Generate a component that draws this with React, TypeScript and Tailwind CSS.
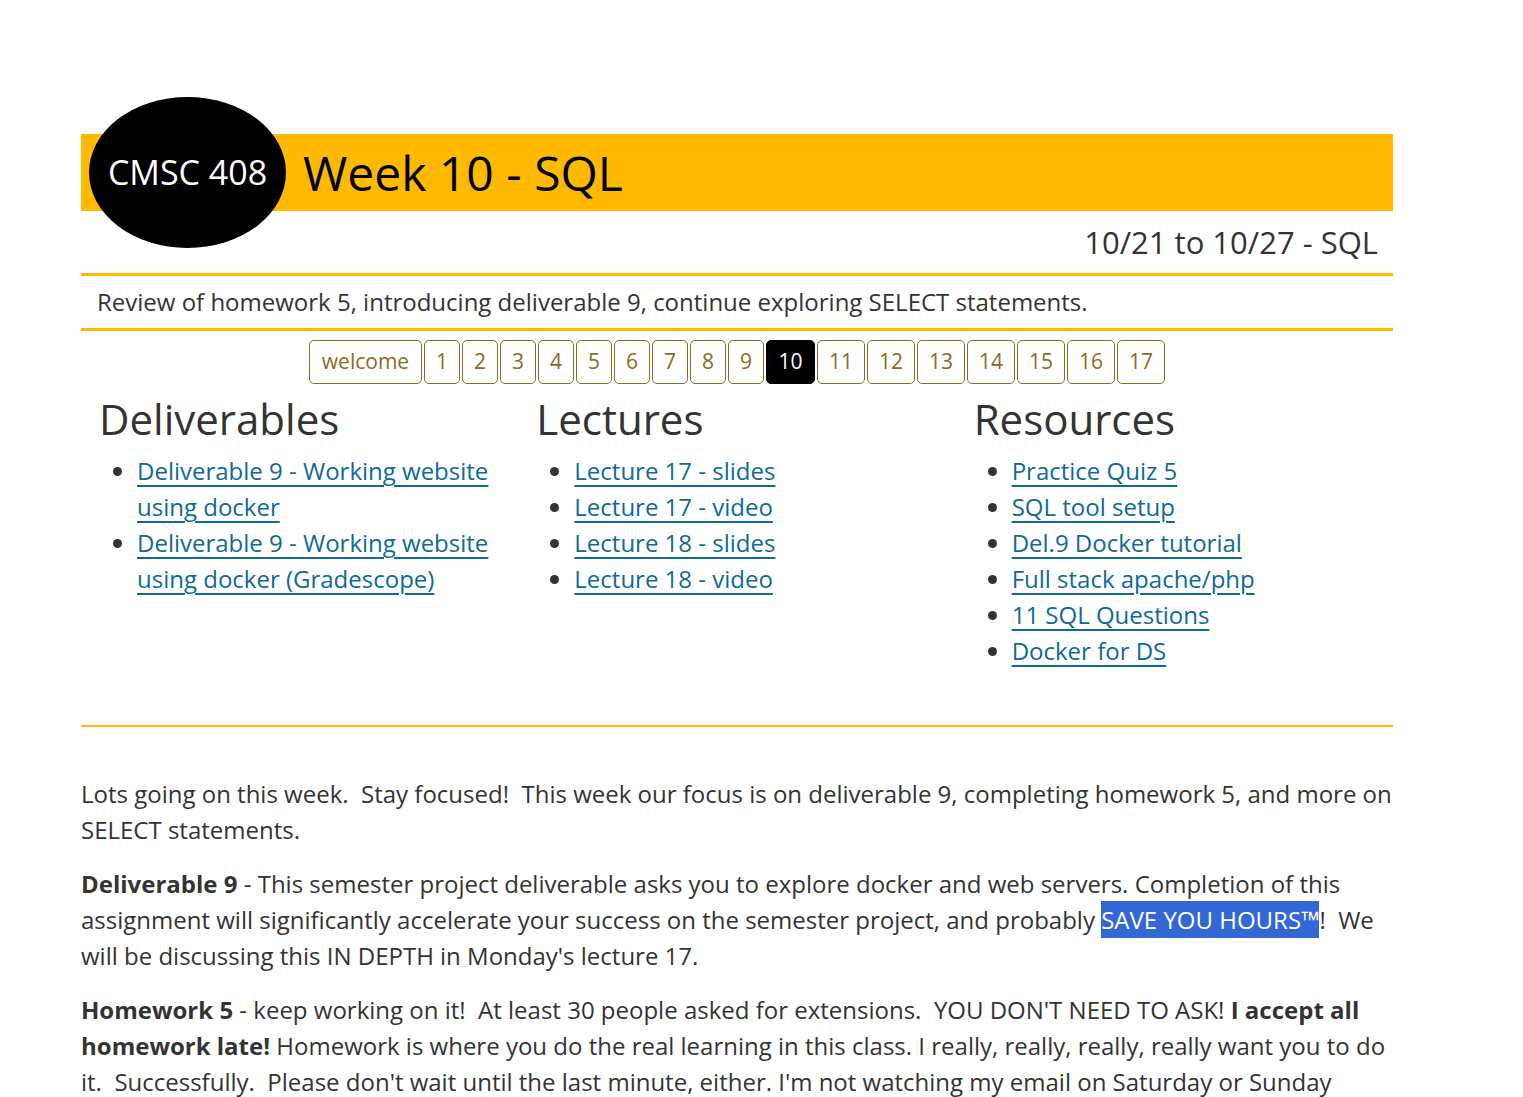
const weeks = ["1", "2", "3", "4", "5", "6", "7", "8", "9", "10", "11", "12", "13", "14", "15", "16", "17"];

const columns = [
  {
    title: "Deliverables",
    links: [
      "Deliverable 9 - Working website using docker",
      "Deliverable 9 - Working website using docker (Gradescope)",
    ],
  },
  {
    title: "Lectures",
    links: ["Lecture 17 - slides", "Lecture 17 - video", "Lecture 18 - slides", "Lecture 18 - video"],
  },
  {
    title: "Resources",
    links: [
      "Practice Quiz 5",
      "SQL tool setup",
      "Del.9 Docker tutorial",
      "Full stack apache/php",
      "11 SQL Questions",
      "Docker for DS",
    ],
  },
];

function WeekNav() {
  return (
    <nav className="mt-[9px] flex justify-center gap-[2px]">
      <a className="flex h-[44px] w-[113px] items-center justify-center rounded-[5px] border border-[#8c6a1f] text-[21px] text-[#8c6a1f]">
        welcome
      </a>
      {weeks.map((w) => (
        <a
          key={w}
          className={
            w === "10"
              ? "flex h-[44px] w-[49px] items-center justify-center rounded-[5px] border border-black bg-black text-[21px] text-white"
              : w.length > 1
                ? "flex h-[44px] w-[48px] items-center justify-center rounded-[5px] border border-[#8c6a1f] text-[21px] text-[#8c6a1f]"
                : "flex h-[44px] w-[36px] items-center justify-center rounded-[5px] border border-[#8c6a1f] text-[21px] text-[#8c6a1f]"
          }
        >
          {w}
        </a>
      ))}
    </nav>
  );
}

export default function App() {
  return (
    <div className="min-h-screen bg-white font-['Open_Sans',sans-serif] text-[#333]">
      <div className="ml-[81px] w-[1312px] pt-[134px]">
        <header className="flex h-[77px] items-center bg-[#ffba00]">
          <div className="-my-[37px] ml-[8px] flex h-[151px] w-[197px] shrink-0 items-center justify-center rounded-[50%] bg-black text-[34px] text-white">
            CMSC 408
          </div>
          <h1 className="ml-[17px] text-[48px] leading-none text-black">Week 10 - SQL</h1>
        </header>

        <div className="flex h-[65px] items-center justify-end border-b-[3px] border-[#ffba00] pr-[15px] text-[31px]">
          10/21 to 10/27 - SQL
        </div>
        <div className="flex h-[55px] items-center border-b-[3px] border-[#ffba00] pl-[16px] text-[24px]">
          Review of homework 5, introducing deliverable 9, continue exploring SELECT statements.
        </div>

        <WeekNav />

        <div className="mt-[10px] grid grid-cols-3 border-b-2 border-[#ffba00] pb-[56px]">
          {columns.map((col) => (
            <section key={col.title} className="px-[20px]">
              <h2 className="-ml-[2px] text-[42px] leading-[50px]">{col.title}</h2>
              <ul className="mt-[9px] list-disc pl-[36px] text-[24px] leading-[36px]">
                {col.links.map((l, i) => (
                  <li key={i} className="marker:text-[#333]">
                    <a className="text-[#0e6a9a] underline decoration-[2px] underline-offset-[5px]">{l}</a>
                  </li>
                ))}
              </ul>
            </section>
          ))}
        </div>

        <div className="mt-[49px] space-y-[18px] text-[24px] leading-[36px]">
          <p>
            Lots going on this week.{"\u00a0 "}Stay focused!{"\u00a0 "}This week our focus is on deliverable 9, completing
            homework 5, and more on SELECT statements.
          </p>
          <p>
            <b>Deliverable 9</b> - This semester project deliverable asks you to explore docker and web servers. Completion of
            this assignment will significantly accelerate your success on the semester project, and probably{" "}
            <span className="bg-[#3367d6] py-[2px] text-white">SAVE YOU HOURS™</span>!{"\u00a0 "}We will be discussing this IN
            DEPTH in Monday's lecture 17.
          </p>
          <p>
            <b>Homework 5</b> - keep working on it!{"\u00a0 "}At least 30 people asked for extensions.{"\u00a0 "}YOU DON'T NEED
            TO ASK! <b>I accept all homework late!</b> Homework is where you do the real learning in this class. I really,
            really, really, really want you to do it.{"\u00a0 "}Successfully.{"\u00a0 "}Please don't wait until the last
            minute, either. I'm not watching my email on Saturday or Sunday
          </p>
        </div>
      </div>
    </div>
  );
}
